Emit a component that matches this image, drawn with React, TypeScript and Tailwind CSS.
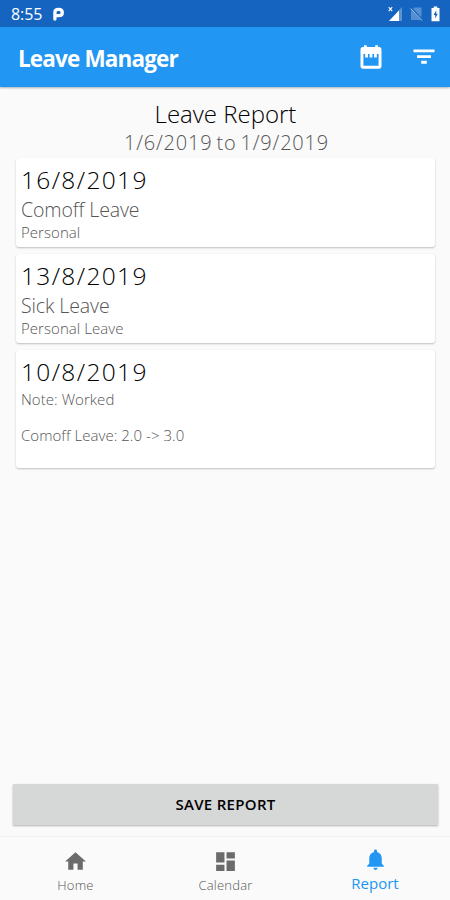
import React from "react";

type Leave = { date: string; kind?: string; lines: string[] };

const leaves: Leave[] = [
  { date: "16/8/2019", kind: "Comoff Leave", lines: ["Personal"] },
  { date: "13/8/2019", kind: "Sick Leave", lines: ["Personal Leave"] },
  { date: "10/8/2019", lines: ["Note: Worked", "", "Comoff Leave: 2.0 -> 3.0", ""] },
];

function StatusBar() {
  return (
    <div className="flex h-[27px] shrink-0 items-center bg-[#1565c0] pl-[11px] pr-[10px] text-white">
      <span className="text-[16px] leading-[20px] tracking-[-0.1px]">8:55</span>
      <svg className="ml-[10px] mt-px h-[14px] w-[13px]" viewBox="0 0 12 14" fill="none" stroke="#fff">
        <path d="M2.4 12V5.2Q2.4 2.3 6 2.3Q9.8 2.3 9.8 5.4Q9.8 8.6 6.2 8.6H3" strokeWidth="3.3" strokeLinecap="round" />
      </svg>
      <div className="ml-auto flex items-center">
        <svg className="h-[16px] w-[15px]" viewBox="0 0 15 16">
          <path d="M14 1V15H1Z" fill="#fff" fillOpacity=".3" />
          <path d="M11 4.4V15H1Z" fill="#fff" />
          <path d="M.7 1.2L4.2 5.2M4.2 1.2L.7 5.2" stroke="#fff" strokeWidth="1.1" />
        </svg>
        <svg className="ml-[7px] h-[16px] w-[13px]" viewBox="0 0 13 16">
          <path d="M4.5 1.5H11.5V14H1V4Z" fill="#fff" fillOpacity=".28" />
          <path d="M.8 1.8L12.3 14" stroke="#1565c0" strokeWidth="2.2" />
          <path d="M.6 2.4L12 14.6" stroke="#fff" strokeOpacity=".6" strokeWidth="1" />
        </svg>
        <svg className="ml-[8px] h-[16px] w-[9px]" viewBox="0 0 9 16">
          <path d="M2.7 .5H6.3V2H8.5V15.3H.5V2H2.7Z" fill="#fff" />
          <path d="M5.2 4.5L2.5 9H4.2V12.5L6.7 7.8H5.2Z" fill="#1565c0" />
        </svg>
      </div>
    </div>
  );
}

function AppBar() {
  return (
    <header className="flex h-[60px] shrink-0 items-center bg-[#2196f3] pl-[18px] pr-[12px] text-white shadow-[0_1px_2px_rgba(0,0,0,0.3)]">
      <h1 className="pt-[3px] text-[22.5px] font-bold leading-[30px] tracking-[-0.85px]">Leave Manager</h1>
      <svg className="ml-auto size-[28px]" viewBox="0 0 24 24" fill="#fff">
        <path fillRule="evenodd" d="M19 3.5h-1V2h-2.4v1.5H8.4V2H6v1.5H5c-1.11 0-2 .9-2 2V20c0 1.1.89 2 2 2h14c1.1 0 2-.9 2-2V5.5c0-1.1-.9-2-2-2zM18.5 19.5H5.5V9.5h13v10z" />
        <path d="M7 9.5h2.4v3H7zM10.8 9.500h2.4v3h-2.4zM14.6 9.500H17v3h-2.4z" />
      </svg>
      <svg className="ml-[25px] size-[28px]" viewBox="0 0 24 24" fill="#fff">
        <path d="M9.6 17.7h4.8v-2.5H9.6zM3 5.5V8h18V5.5zM6 12.9h12v-2.5H6z" />
      </svg>
    </header>
  );
}

function LeaveCard({ leave }: { leave: Leave }) {
  return (
    <article className="rounded-[3px] bg-white px-[5px] pb-[6px] pt-[6px] shadow-[0_1px_2px_rgba(0,0,0,0.24)]">
      <h3 className="h-[32px] text-[24.5px] font-light leading-[31px] tracking-[1.35px] text-black">{leave.date}</h3>
      {leave.kind ? (
        <p className="h-[27px] text-[19.5px] font-light leading-[27px] tracking-[-0.1px] text-[#555]">{leave.kind}</p>
      ) : (
        <div className="h-[2px]" />
      )}
      {leave.lines.map((line, i) => (
        <p key={i} className="h-[18px] text-[15px] font-light leading-[19px] tracking-[0.05px] text-[#555]">{line}</p>
      ))}
    </article>
  );
}

function Tab({ label, active, path }: { label: string; active?: boolean; path: string }) {
  return (
    <div className={`flex flex-1 flex-col items-center ${active ? "pt-[10px] text-[#2196f3]" : "pt-[12px] text-[#6b6b6b]"}`}>
      <svg className="size-[25px]" viewBox="0 0 24 24" fill="currentColor">
        <path d={path} />
      </svg>
      <span className={active ? "pt-px text-[15px] leading-[21px]" : "pl-px text-[13px] font-light leading-[22px] tracking-[0.2px] text-[#555]"}>{label}</span>
    </div>
  );
}

export default function App() {
  return (
    <div className="flex h-[900px] w-[450px] flex-col overflow-hidden bg-[#fafafa] font-['Open_Sans','Noto_Sans',sans-serif]">
      <StatusBar />
      <AppBar />
      <main className="flex flex-1 flex-col">
        <div className="flex flex-col items-center pt-[11px]">
          <h2 className="h-[32px] pl-px text-[24px] font-light leading-[32px] text-black">Leave Report</h2>
          <p className="h-[28px] pl-[3px] text-[20px] font-light leading-[26px] tracking-[0.8px] [word-spacing:-2px] text-[#555]">1/6/2019 to 1/9/2019</p>
        </div>
        <div className="ml-[16px] mr-[15px] flex flex-col gap-[7px]">
          {leaves.map((leave) => (
            <LeaveCard key={leave.date} leave={leave} />
          ))}
        </div>
        <button className="ml-[13px] mr-[12px] mt-auto h-[41px] bg-[#d6d7d7] text-[15px] font-semibold leading-[41px] tracking-[0.3px] text-black shadow-[0_1px_2px_rgba(0,0,0,0.3)]">
          SAVE REPORT
        </button>
      </main>
      <nav className="mt-[11px] flex h-[64px] shrink-0 border-t border-[#f0f0f0]">
        <Tab label="Home" path="M10 20v-6h4v6h5v-8h3L12 3 2 12h3v8z" />
        <Tab label="Calendar" path="M3 13h8V3H3v10zm0 8h8v-6H3v6zm10 0h8V11h-8v10zm0-18v6h8V3h-8z" />
        <Tab label="Report" active path="M12 22c1.1 0 2-.9 2-2h-4c0 1.1.89 2 2 2zm6-6v-5c0-3.07-1.64-5.64-4.5-6.32V4c0-.83-.67-1.5-1.5-1.5s-1.5.67-1.5 1.5v.68C7.63 5.36 6 7.92 6 11v5l-2 2v1h16v-1l-2-2z" />
      </nav>
    </div>
  );
}
